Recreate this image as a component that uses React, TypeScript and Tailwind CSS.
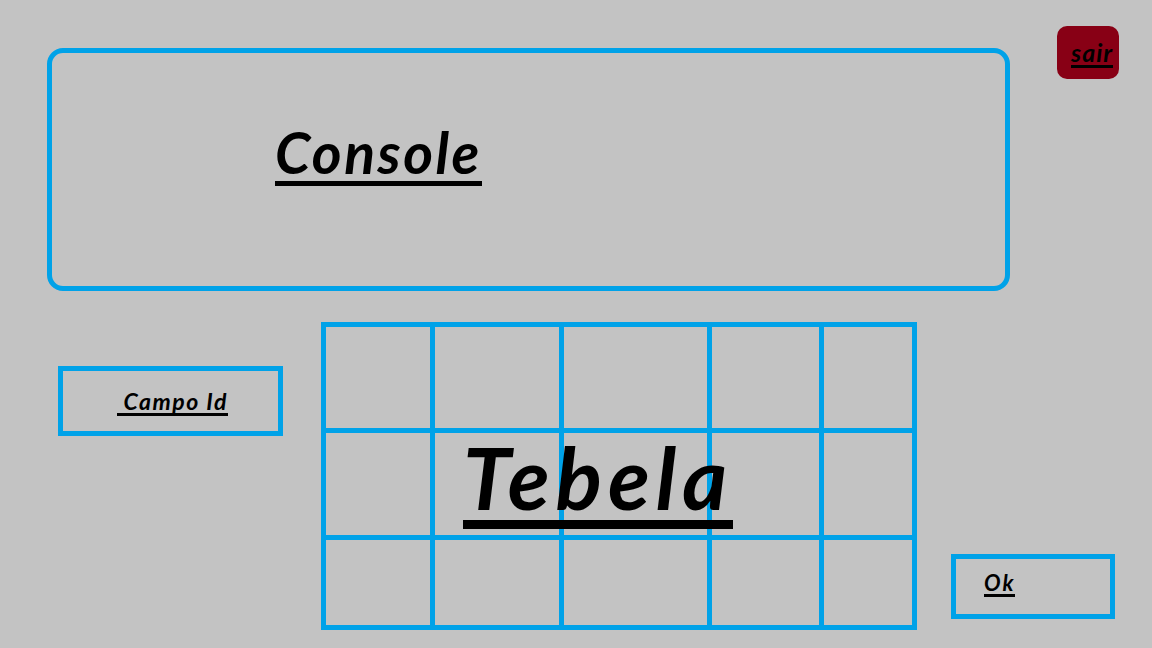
import React from "react";

const cells = Array.from({ length: 15 });

export default function App() {
  return (
    <div
      className="w-[1152px] h-[648px] bg-[#c3c3c3] overflow-hidden"
      style={{ fontFamily: "Lato, 'Open Sans', sans-serif" }}
    >
      {/* top row */}
      <div className="flex items-start pl-[47px]">
        <div className="mt-[48px] w-[963px] h-[243px] border-[5px] border-[#00a2e8] rounded-[16px] pl-[223px] pt-[71px]">
          <span className="inline-block text-[57px] leading-none font-bold italic tracking-[2.5px] text-black border-b-[5px] border-black">
            Console
          </span>
        </div>
        <div className="ml-[47px] mt-[26px] w-[62px] h-[53px] rounded-[10px] bg-[#880015] pl-[14px] pt-[14px]">
          <span className="inline-block text-[25px] leading-none font-bold italic tracking-[1px] text-black border-b-[3px] border-black">
            sair
          </span>
        </div>
      </div>

      {/* bottom row */}
      <div className="flex items-start mt-[31px]">
        <div className="ml-[58px] mt-[44px] w-[225px] h-[70px] border-[5px] border-[#00a2e8] pl-[54px] pt-[19px]">
          <span className="inline-block text-[23px] leading-none font-bold italic tracking-[1.5px] text-black border-b-[3px] border-black whitespace-pre">
            {" Campo Id"}
          </span>
        </div>

        <div className="relative ml-[38px] w-[596px] h-[308px]">
          <div className="grid grid-cols-[104px_124px_143px_107px_88px] grid-rows-[101px_102px_85px] gap-[5px] p-[5px] bg-[#00a2e8]">
            {cells.map((_, i) => (
              <div key={i} className="bg-[#c3c3c3]" />
            ))}
          </div>
          <span className="absolute left-[142px] top-[112px] inline-block text-[86px] leading-none font-bold italic tracking-[6px] text-black border-b-[9px] border-black">
            Tebela
          </span>
        </div>

        <div className="ml-[34px] mt-[232px] w-[164px] h-[65px] border-[5px] border-[#00a2e8] pl-[28px] pt-[13px]">
          <span className="inline-block text-[22px] leading-none font-bold italic tracking-[2px] text-black border-b-[3px] border-black">
            Ok
          </span>
        </div>
      </div>
    </div>
  );
}
